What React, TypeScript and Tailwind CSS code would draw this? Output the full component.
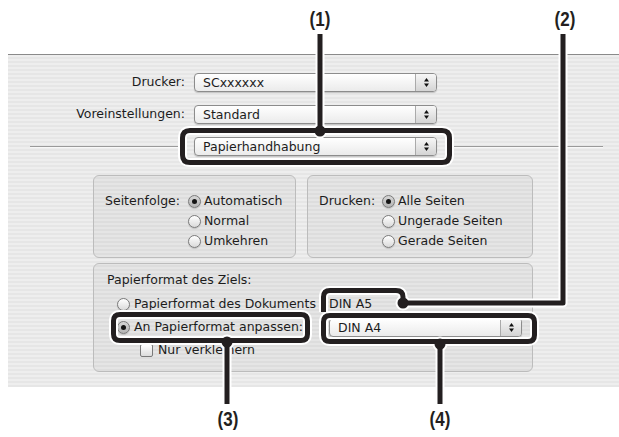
import React from "react";

function Popup({ label, wide }: { label: string; wide?: boolean }) {
  return (
    <div
      className={
        (wide ? "w-[243px]" : "w-[193px]") +
        " flex h-[19px] rounded-[4px] border border-[#8c8c8c] bg-gradient-to-b from-white to-[#ebebeb] shadow-[0_1px_1px_rgba(0,0,0,0.18)] overflow-hidden"
      }
    >
      <div className="flex-1 pl-[8px] leading-[17px]">{label}</div>
      <div className="w-[21px] border-l border-[#aaaaaa] bg-gradient-to-b from-[#f7f7f7] to-[#d4d4d4] flex items-center justify-center">
        <svg width="7" height="11" viewBox="0 0 7 11">
          <path d="M3.5 1 L6 4.5 H1 Z" fill="#111" />
          <path d="M3.5 10 L6 6.5 H1 Z" fill="#111" />
        </svg>
      </div>
    </div>
  );
}

function Radio({ on }: { on?: boolean }) {
  return (
    <span
      className={
        (on
          ? "bg-gradient-to-b from-[#d6d6d6] to-[#b4b4b4] "
          : "bg-gradient-to-b from-white to-[#dadada] ") +
        "inline-flex w-[13px] h-[13px] shrink-0 rounded-full border border-[#7a7a7a] items-center justify-center shadow-[0_1px_1px_rgba(0,0,0,0.15)]"
      }
    >
      {on && <span className="w-[5px] h-[5px] rounded-full bg-[#151515]" />}
    </span>
  );
}

function RadioRow({ on, label }: { on?: boolean; label: string }) {
  return (
    <div className="flex items-center h-[20px] gap-[3px]">
      <Radio on={on} />
      <span>{label}</span>
    </div>
  );
}

const K = "#231f20";

function Callouts() {
  const paths = [
    "M320 34 V131",
    "M182.5 138 Q182.5 130.5 190 130.5 H442 Q449.5 130.5 449.5 138 V155 Q449.5 162.5 442 162.5 H190 Q182.5 162.5 182.5 155 Z",
    "M563 34 V303 H403",
    "M323.5 312 V297 Q323.5 290.5 330 290.5 H396 Q403 290.5 403 297 V303",
    "M113.5 321 Q113.5 314.5 120 314.5 H301 Q307.5 314.5 307.5 321 V334 Q307.5 340.5 301 340.5 H120 Q113.5 340.5 113.5 334 Z",
    "M227 342 V404",
    "M323.5 322 Q323.5 315.5 330 315.5 H528 Q534.5 315.5 534.5 322 V335 Q534.5 341.5 528 341.5 H330 Q323.5 341.5 323.5 335 Z",
    "M440 344 V404",
  ];
  const dots: [number, number][] = [
    [320, 131],
    [403, 303],
    [227, 342],
    [440, 344],
  ];
  return (
    <svg className="absolute inset-0 pointer-events-none" width="619" height="437" viewBox="0 0 619 437">
      {paths.map((d, i) => (
        <path key={"w" + i} d={d} fill="none" stroke="#ffffff" strokeWidth={9} strokeLinejoin="round" />
      ))}
      {dots.map(([x, y], i) => (
        <circle key={"wd" + i} cx={x} cy={y} r={7.5} fill="#ffffff" />
      ))}
      {paths.map((d, i) => (
        <path key={"b" + i} d={d} fill="none" stroke={K} strokeWidth={5} strokeLinejoin="round" />
      ))}
      {dots.map(([x, y], i) => (
        <circle key={"bd" + i} cx={x} cy={y} r={5.5} fill={K} />
      ))}
    </svg>
  );
}

export default function App() {
  return (
    <div className="relative w-[619px] h-[437px] bg-white overflow-hidden font-['DejaVu_Sans',sans-serif] text-[12.5px] text-[#1c1c1c]">
      <div className="h-[54px]" />
      <div className="ml-[8px] h-[333px] border-t border-[#8a8a8a] bg-[repeating-linear-gradient(180deg,#eeeeee_0px,#eeeeee_2px,#e6e6e6_2px,#e6e6e6_4px)] pt-[18px]">
        <div className="flex items-center h-[19px]">
          <div className="w-[177px] text-right">Drucker:</div>
          <div className="ml-[9px]">
            <Popup label="SCxxxxxx" wide />
          </div>
        </div>
        <div className="flex items-center h-[19px] mt-[13px]">
          <div className="w-[177px] text-right">Voreinstellungen:</div>
          <div className="ml-[9px]">
            <Popup label="Standard" wide />
          </div>
        </div>
        <div className="flex items-center h-[19px] mt-[13px]">
          <div className="ml-[22px] w-[156px] h-[2px] border-t border-b border-t-[#9a9a9a] border-b-[#f8f8f8]" />
          <div className="ml-[8px]">
            <Popup label="Papierhandhabung" wide />
          </div>
          <div className="ml-[8px] w-[158px] h-[2px] border-t border-b border-t-[#9a9a9a] border-b-[#f8f8f8]" />
        </div>

        <div className="flex mt-[19px] ml-[85px] gap-[11px]">
          <div className="flex w-[203px] h-[83px] rounded-[6px] border border-[#bcbcbc] bg-black/[0.035] pt-[15px] pl-[11px]">
            <div className="w-[83px] leading-[20px]">Seitenfolge:</div>
            <div className="flex flex-col">
              <RadioRow on label="Automatisch" />
              <RadioRow label="Normal" />
              <RadioRow label="Umkehren" />
            </div>
          </div>
          <div className="flex w-[226px] h-[83px] rounded-[6px] border border-[#bcbcbc] bg-black/[0.035] pt-[15px] pl-[11px]">
            <div className="w-[63px] leading-[20px]">Drucken:</div>
            <div className="flex flex-col">
              <RadioRow on label="Alle Seiten" />
              <RadioRow label="Ungerade Seiten" />
              <RadioRow label="Gerade Seiten" />
            </div>
          </div>
        </div>

        <div className="mt-[5px] ml-[85px] w-[440px] h-[109px] rounded-[6px] border border-[#bcbcbc] bg-black/[0.035] pt-[6px] pl-[13px]">
          <div className="h-[20px] leading-[20px]">Papierformat des Ziels:</div>
          <div className="flex items-center h-[20px] mt-[4px] pl-[10px]">
            <div className="w-[212px] flex items-center gap-[4px]">
              <Radio />
              <span className="whitespace-nowrap">Papierformat des Dokuments</span>
            </div>
            <span>DIN A5</span>
          </div>
          <div className="flex items-center h-[20px] mt-[3px] pl-[10px]">
            <div className="w-[212px] flex items-center gap-[4px]">
              <Radio on />
              <span className="whitespace-nowrap">An Papierformat anpassen:</span>
            </div>
            <Popup label="DIN A4" />
          </div>
          <div className="flex items-center h-[20px] mt-[3px] pl-[33px] gap-[5px]">
            <span className="w-[13px] h-[13px] rounded-[2px] border border-[#7a7a7a] bg-gradient-to-b from-white to-[#dcdcdc]" />
            <span>Nur verkleinern</span>
          </div>
        </div>
      </div>

      <Callouts />

      <div className="absolute left-[300px] top-[7px] w-[40px] text-center scale-x-[0.85] font-['Liberation_Sans',sans-serif] font-bold text-[20px] leading-[24px] text-[#231f20]">(1)</div>
      <div className="absolute left-[545px] top-[7px] w-[40px] text-center scale-x-[0.85] font-['Liberation_Sans',sans-serif] font-bold text-[20px] leading-[24px] text-[#231f20]">(2)</div>
      <div className="absolute left-[208px] top-[407px] w-[40px] text-center scale-x-[0.85] font-['Liberation_Sans',sans-serif] font-bold text-[20px] leading-[24px] text-[#231f20]">(3)</div>
      <div className="absolute left-[420px] top-[407px] w-[40px] text-center scale-x-[0.85] font-['Liberation_Sans',sans-serif] font-bold text-[20px] leading-[24px] text-[#231f20]">(4)</div>
    </div>
  );
}
